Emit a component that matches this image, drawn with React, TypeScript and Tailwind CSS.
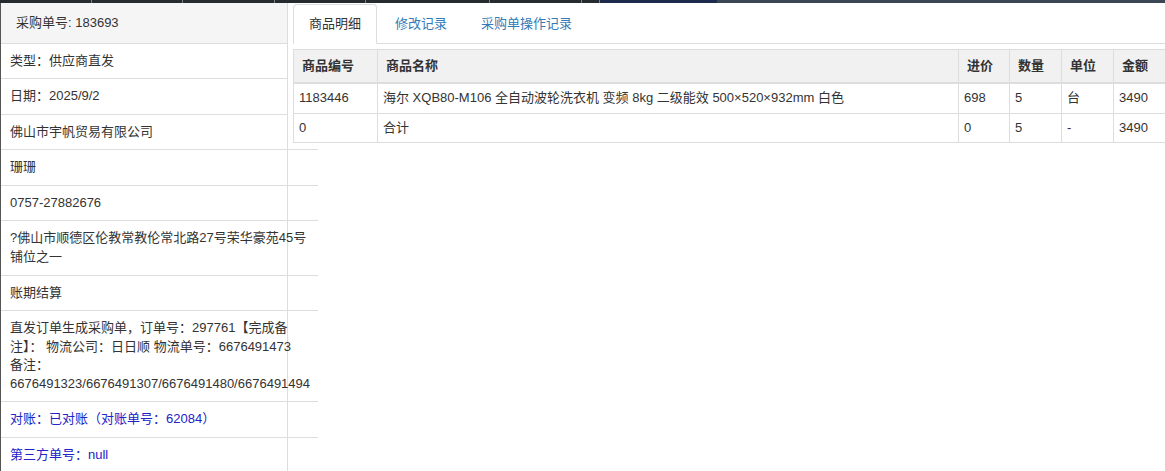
import React from 'react';

const info: { text: React.ReactNode; blue?: boolean }[] = [
  { text: '类型：供应商直发' },
  { text: '日期：2025/9/2' },
  { text: '佛山市宇帆贸易有限公司' },
  { text: '珊珊' },
  { text: '0757-27882676' },
  { text: '?佛山市顺德区伦教常教伦常北路27号荣华豪苑45号铺位之一' },
  { text: '账期结算' },
  {
    text: (
      <>
        直发订单生成采购单，订单号：297761【完成备注】： 物流公司：日日顺 物流单号：6676491473
        <br />
        备注：6676491323/6676491307/6676491480/6676491494
      </>
    ),
  },
  { text: '对账：已对账（对账单号：62084）', blue: true },
  { text: '第三方单号：null', blue: true },
];

const rows = [
  ['1183446', '海尔 XQB80-M106 全自动波轮洗衣机 变频 8kg 二级能效 500×520×932mm 白色', '698', '5', '台', '3490'],
  ['0', '合计', '0', '5', '-', '3490'],
];

const ticks = [92, 91, 92, 91, 124, 92, 18];

export default function App() {
  return (
    <div className="w-[1165px] h-[471px] overflow-hidden bg-white text-[13px] leading-[18.57px] text-[#333] font-['Liberation_Sans','Noto_Sans_CJK_SC',sans-serif]">
      {/* top strip */}
      <div className="flex h-[3px]">
        {ticks.map((w, i) => (
          <div key={i} className="h-full bg-[#262b30] border-r border-[#7a7f84]" style={{ width: w }} />
        ))}
        <div className="h-full w-[117px] bg-[#1c2a4c]" />
        <div className="h-full flex-1 bg-[#3a4653]" />
      </div>

      <div className="flex items-start">
        {/* left info panel */}
        <div className="w-[288px] h-[468px] shrink-0 border-l border-l-[#555] border-r border-r-[#ddd]">
          <div className="bg-[#f5f5f5] px-[15px] pt-[11px] pb-[10px] border-b border-[#ddd]">采购单号: 183693</div>
          {info.map((it, i) => (
            <div
              key={i}
              className={`w-[317px] pl-[9px] pr-[10px] py-[8px] border-b border-[#ddd] ${it.blue ? 'text-[#2323c8]' : ''}`}
            >
              {it.text}
            </div>
          ))}
        </div>

        {/* right tabs panel */}
        <div className="flex-1 bg-white pl-[5px]">
          <ul className="flex mt-px border-b border-[#ddd]">
            <li className="-mb-px mr-[2px] px-[15px] pt-[10px] pb-[9px] bg-white border border-[#ddd] border-b-transparent rounded-t-[4px]">
              商品明细
            </li>
            <li className="-mb-px mr-[2px] px-[15px] pt-[10px] pb-[9px] border border-transparent text-[#337ab7]">修改记录</li>
            <li className="-mb-px mr-[2px] px-[15px] pt-[10px] pb-[9px] border border-transparent text-[#337ab7]">采购单操作记录</li>
          </ul>
          <table className="mt-[5px] w-[872px] table-fixed border-collapse border border-[#ddd]">
            <colgroup>
              <col className="w-[84px]" />
              <col className="w-[581px]" />
              <col className="w-[51px]" />
              <col className="w-[52px]" />
              <col className="w-[52px]" />
              <col className="w-[52px]" />
            </colgroup>
            <thead>
              <tr className="bg-[#f1f1f1]">
                {['商品编号', '商品名称', '进价', '数量', '单位', '金额'].map((h) => (
                  <th key={h} className="px-[8px] py-[7px] text-left font-bold border border-[#ddd] border-b-2">
                    {h}
                  </th>
                ))}
              </tr>
            </thead>
            <tbody>
              {rows.map((r, i) => (
                <tr key={i}>
                  {r.map((c, j) => (
                    <td key={j} className="px-[5px] py-[5px] border border-[#ddd] whitespace-nowrap">
                      {c}
                    </td>
                  ))}
                </tr>
              ))}
            </tbody>
          </table>
        </div>
      </div>
    </div>
  );
}
